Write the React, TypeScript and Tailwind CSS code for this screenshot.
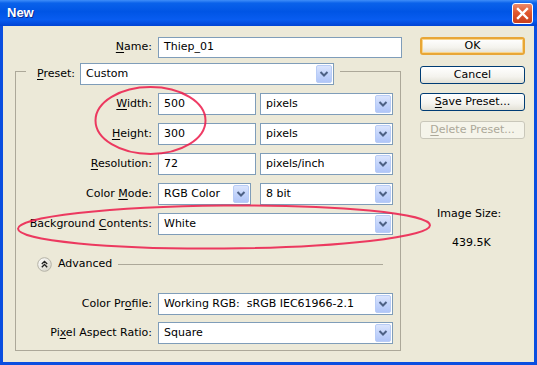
import React from "react";

const font = { fontFamily: '"DejaVu Sans", Verdana, sans-serif' };

function U({ children }: { children: React.ReactNode }) {
  return <span className="underline underline-offset-[2px] decoration-[1px]">{children}</span>;
}

function Arrow() {
  return (
    <div className="w-[16px] h-[18px] mr-[1px] rounded-[2px] border border-[#b8ccf6] bg-[linear-gradient(to_bottom,#dbe5fd_0%,#c3d4fb_50%,#b1c6f8_100%)] flex items-center justify-center shrink-0">
      <svg width="10" height="8" viewBox="0 0 10 8">
        <path d="M1.5 2 L5 5.5 L8.5 2" fill="none" stroke="#4d6185" strokeWidth="2" />
      </svg>
    </div>
  );
}

function Select({ w, text }: { w: string; text: string }) {
  return (
    <div className={`${w} h-[22px] border border-[#7f9db9] bg-white flex items-center shrink-0`}>
      <span className="flex-1 pl-[5px] whitespace-pre">{text}</span>
      <Arrow />
    </div>
  );
}

function Input({ w, text }: { w: string; text: string }) {
  return (
    <div className={`${w} h-[22px] border border-[#7f9db9] bg-white flex items-center pl-[5px] shrink-0`}>
      {text}
    </div>
  );
}

function Row({ label, children }: { label: React.ReactNode; children: React.ReactNode }) {
  return (
    <div className="flex items-center h-[22px]">
      <div className="w-[136px] text-right whitespace-nowrap">{label}</div>
      <div className="ml-[6px] flex items-center gap-[4px]">{children}</div>
    </div>
  );
}

function Button({ children, cls }: { children: React.ReactNode; cls: string }) {
  return (
    <div className={`w-[105px] h-[18px] rounded-[3px] flex items-center justify-center bg-[linear-gradient(to_bottom,#ffffff_0%,#f4f3ee_60%,#e3e1d6_100%)] ${cls}`}>
      {children}
    </div>
  );
}

export default function App() {
  return (
    <div className="w-[537px] h-[365px] flex flex-col overflow-hidden relative text-[11px] text-black" style={font}>
      {/* Title bar */}
      <div className="h-[26px] flex items-center justify-between pl-[7px] pr-[4px] bg-[linear-gradient(to_bottom,#3f8ef9_0%,#0a62ea_12%,#0055e5_45%,#085cf0_75%,#0043d4_100%)]">
        <span className="text-white font-bold text-[13px] [text-shadow:1px_1px_0_#0c2a8c]" style={{ fontFamily: '"Liberation Sans", Arial, sans-serif' }}>
          New
        </span>
        <div className="w-[21px] h-[21px] rounded-[3px] border border-white bg-[linear-gradient(to_bottom,#ec8a6a_0%,#e0582f_45%,#c83e1c_100%)] flex items-center justify-center">
          <svg width="13" height="13" viewBox="0 0 13 13">
            <path d="M2 2 L11 11 M11 2 L2 11" stroke="#fff" strokeWidth="2.4" strokeLinecap="square" />
          </svg>
        </div>
      </div>
      {/* Frame */}
      <div className="flex-1 flex bg-[#0a4ee0] px-[3px] pb-[3px]">
        <div className="flex-1 flex bg-[#ece9d8] pt-[11px] pl-[12px]">
          {/* Left column */}
          <div className="w-[388px] flex flex-col">
            <div className="flex items-center h-[21px]">
              <div className="w-[137px] text-right">
                <U>N</U>ame:
              </div>
              <div className="ml-[6px] w-[244px] h-[21px] border border-[#7f9db9] bg-white flex items-center pl-[5px]">
                Thiep_01
              </div>
            </div>
            {/* Group box */}
            <div className="mt-[13px] w-[386px] border border-[#aca899] flex flex-col pb-[6px]">
              <div className="-mt-[9px] ml-[10px] self-start bg-[#ece9d8] flex items-center pl-[11px] pr-[6px]">
                <span>
                  <U>P</U>reset:
                </span>
                <div className="ml-[5px]">
                  <Select w="w-[254px]" text="Custom" />
                </div>
              </div>
              <div className="pt-[8px] flex flex-col gap-[8px]">
                <Row label={<><U>W</U>idth:</>}>
                  <Input w="w-[98px]" text="500" />
                  <Select w="w-[133px]" text="pixels" />
                </Row>
                <Row label={<><U>H</U>eight:</>}>
                  <Input w="w-[98px]" text="300" />
                  <Select w="w-[133px]" text="pixels" />
                </Row>
                <Row label={<><U>R</U>esolution:</>}>
                  <Input w="w-[98px]" text="72" />
                  <Select w="w-[133px]" text="pixels/inch" />
                </Row>
                <Row label={<>Color <U>M</U>ode:</>}>
                  <div className="mr-[5px]">
                    <Select w="w-[93px]" text="RGB Color" />
                  </div>
                  <Select w="w-[133px]" text="8 bit" />
                </Row>
                <Row label={<>Background <U>C</U>ontents:</>}>
                  <Select w="w-[235px]" text="White" />
                </Row>
              </div>
              {/* Advanced */}
              <div className="mt-[21px] h-[16px] flex items-center pl-[21px] pr-[17px]">
                <svg width="15" height="15" viewBox="0 0 15 15" className="shrink-0">
                  <defs>
                    <linearGradient id="adv" x1="0" y1="0" x2="1" y2="1">
                      <stop offset="0" stopColor="#ffffff" />
                      <stop offset="1" stopColor="#d4d2c6" />
                    </linearGradient>
                  </defs>
                  <circle cx="7.5" cy="7.5" r="6.8" fill="url(#adv)" stroke="#b4b2a6" strokeWidth="1" />
                  <path d="M4.8 7 L7.5 4.3 L10.2 7 M4.8 10.2 L7.5 7.5 L10.2 10.2" fill="none" stroke="#222" strokeWidth="1.3" />
                </svg>
                <span className="ml-[6px]">Advanced</span>
                <div className="flex-1 ml-[6px] h-[1px] bg-[#aca899]" />
              </div>
              <div className="mt-[21px] flex flex-col gap-[7px]">
                <Row label={<>Color Pr<U>o</U>file:</>}>
                  <Select w="w-[235px]" text="Working RGB:  sRGB IEC61966-2.1" />
                </Row>
                <Row label={<>Pi<U>x</U>el Aspect Ratio:</>}>
                  <Select w="w-[235px]" text="Square" />
                </Row>
              </div>
            </div>
          </div>
          {/* Right column */}
          <div className="ml-[17px] w-[105px] flex flex-col">
            <Button cls="border-[2px] border-[#e8a636] shadow-[inset_0_0_0_1px_#f8d58c]">OK</Button>
            <div className="mt-[11px]">
              <Button cls="border border-[#003c74]">Cancel</Button>
            </div>
            <div className="mt-[9px]">
              <Button cls="border border-[#003c74]">
                <span>
                  <U>S</U>ave Preset...
                </span>
              </Button>
            </div>
            <div className="mt-[10px]">
              <div className="w-[105px] h-[18px] rounded-[3px] border border-[#c9c7ba] bg-[#f5f4ea] text-[#aca899] flex items-center justify-center">
                <span>
                  <U>D</U>elete Preset...
                </span>
              </div>
            </div>
            <div className="mt-[67px] pl-[17px] flex flex-col">
              <span>Image Size:</span>
              <span className="mt-[12px] pl-[15px]">439.5K</span>
            </div>
          </div>
        </div>
      </div>
      {/* Annotation ellipses */}
      <svg className="absolute inset-0 pointer-events-none" width="537" height="365" viewBox="0 0 537 365">
        <ellipse cx="150.5" cy="120.5" rx="55" ry="33.5" fill="none" stroke="#ec1a4a" strokeOpacity="0.85" strokeWidth="2" />
        <ellipse cx="224" cy="227" rx="206" ry="21.5" transform="rotate(-0.5 224 227)" fill="none" stroke="#ec1a4a" strokeOpacity="0.85" strokeWidth="2" />
      </svg>
    </div>
  );
}
